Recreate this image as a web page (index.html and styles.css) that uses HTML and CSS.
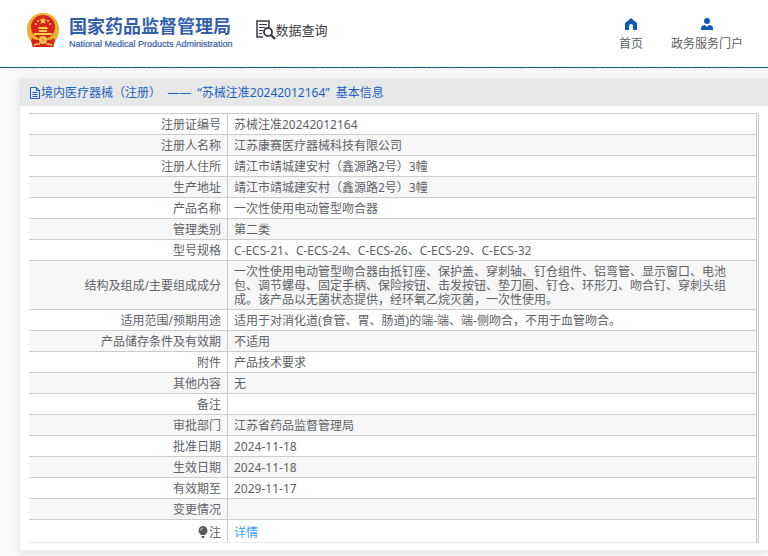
FILE: index.html
```html
<!DOCTYPE html>
<html lang="zh-CN">
<head>
    <meta charset="UTF-8">
    <meta name="viewport" content="width=device-width, initial-scale=1.0">
    <title>国家药品监督管理局 - 数据查询</title>
    <link rel="stylesheet" href="styles.css">
</head>
<body>
    <header class="header">
        <a class="logo" href="#">
            <svg class="emblem" viewBox="0 0 34 36" aria-hidden="true">
                <path d="M17 1C8 1 1 8 1 17c0 6 2 11 6 14l-1 4h22l-1-4c4-3 6-8 6-14C33 8 26 1 17 1z" fill="#eeb02c"/>
                <circle cx="17" cy="15" r="12" fill="#d8231f"/>
                <path d="M17 5l1 2.600h2.800l-2.200 1.700.8 2.700-2.400-1.600-2.400 1.600.8-2.700-2.200-1.700H16z" fill="#f7d34a"/>
                <g fill="#f7d34a">
                    <circle cx="10" cy="12" r="1"/>
                    <circle cx="12" cy="9" r="1"/>
                    <circle cx="22" cy="9" r="1"/>
                    <circle cx="24" cy="12" r="1"/>
                    <path d="M13 15h8l1 2H12zM13 18h8v2h-8zM8 21h18v2H8z"/>
                </g>
                <path d="M6 26c3 2 5 2 7 2h8c2 0 4 0 7-2l1 3-2 6H7l-2-6z" fill="#d8231f"/>
                <path d="M8 33c2-1 4-1 6-1M26 33c-2-1-4-1-6-1" fill="none" stroke="#f2c74a" stroke-width="1.500"/>
                <circle cx="17" cy="28" r="4" fill="#f2c74a"/>
                <circle cx="17" cy="28" r="1.500" fill="#e0a035"/>
            </svg>
            <span class="logo-text">
                <span class="logo-cn">国家药品监督管理局</span>
                <span class="logo-en">National Medical Products Administration</span>
            </span>
        </a>
        <a class="search-title" href="#">
            <svg class="search-icon" viewBox="0 0 20 20" fill="none" stroke="#3c3c44" aria-hidden="true">
                <path d="M7 17H1V1h12v6" stroke-width="1.500"/>
                <path d="M3 4.500h8M3 7.500h6M3 10.500h4M3 13.500h3" stroke-width="1.200"/>
                <circle cx="12" cy="12" r="4" stroke-width="1.800"/>
                <path d="M15 15l4 4" stroke-width="2.400"/>
            </svg>
            <span>数据查询</span>
        </a>
        <nav class="nav">
            <a href="#">
                <svg viewBox="0 0 12 12" aria-hidden="true"><path d="M6 0l6 5v7H8V8a2 2 0 0 0-4 0v4H0V5z" fill="#1059b4"/></svg>
                <span>首页</span>
            </a>
            <a href="#">
                <svg viewBox="0 0 12 12" aria-hidden="true"><circle cx="6" cy="3" r="3" fill="#1059b4"/><path d="M0 12V10c0-2 2-3 4-3l2 2 2-2c2 0 4 1 4 3v2z" fill="#1059b4"/></svg>
                <span>政务服务门户</span>
            </a>
        </nav>
    </header>

    <main class="card">
        <h1 class="card-title">
            <svg viewBox="0 0 12 12" fill="none" stroke="#1b62c0" aria-hidden="true">
                <path d="M1.500.5h6l3 3v8h-9zM7.500.5v3h3M3.500 5.500h5M3.500 7.500h5M3.500 9.500h5"/>
            </svg>
            <span>境内医疗器械（注册）&nbsp; ——&nbsp; “苏械注准20242012164”&nbsp; 基本信息</span>
        </h1>
        <div class="table-wrap">
            <table class="info">
                <tbody>
                    <tr><th scope="row">注册证编号</th><td>苏械注准20242012164</td></tr>
                    <tr><th scope="row">注册人名称</th><td>江苏康赛医疗器械科技有限公司</td></tr>
                    <tr><th scope="row">注册人住所</th><td>靖江市靖城建安村（鑫源路2号）3幢</td></tr>
                    <tr><th scope="row">生产地址</th><td>靖江市靖城建安村（鑫源路2号）3幢</td></tr>
                    <tr><th scope="row">产品名称</th><td>一次性使用电动管型吻合器</td></tr>
                    <tr><th scope="row">管理类别</th><td>第二类</td></tr>
                    <tr><th scope="row">型号规格</th><td>C-ECS-21、C-ECS-24、C-ECS-26、C-ECS-29、C-ECS-32</td></tr>
                    <tr><th scope="row">结构及组成/主要组成成分</th><td>一次性使用电动管型吻合器由抵钉座、保护盖、穿刺轴、钉仓组件、铝弯管、显示窗口、电池包、调节螺母、固定手柄、保险按钮、击发按钮、垫刀圈、钉仓、环形刀、吻合钉、穿刺头组成。该产品以无菌状态提供，经环氧乙烷灭菌，一次性使用。</td></tr>
                    <tr><th scope="row">适用范围/预期用途</th><td>适用于对消化道(食管、胃、肠道)的端-端、端-侧吻合，不用于血管吻合。</td></tr>
                    <tr><th scope="row">产品储存条件及有效期</th><td>不适用</td></tr>
                    <tr><th scope="row">附件</th><td>产品技术要求</td></tr>
                    <tr><th scope="row">其他内容</th><td>无</td></tr>
                    <tr><th scope="row">备注</th><td></td></tr>
                    <tr><th scope="row">审批部门</th><td>江苏省药品监督管理局</td></tr>
                    <tr><th scope="row">批准日期</th><td>2024-11-18</td></tr>
                    <tr><th scope="row">生效日期</th><td>2024-11-18</td></tr>
                    <tr><th scope="row">有效期至</th><td>2029-11-17</td></tr>
                    <tr><th scope="row">变更情况</th><td></td></tr>
                    <tr class="note">
                        <th scope="row"><svg class="bulb" viewBox="0 0 10 12" aria-hidden="true"><path d="M5 0a4.500 4.500 0 0 1 3 7.800L7 9H3L2 7.800A4.500 4.500 0 0 1 5 0zM3.500 10h3v1l-1 1h-1l-1-1z" fill="#55585c"/><path d="M2.500 4.500A2.500 2.500 0 0 1 5 2" fill="none" stroke="#fff" stroke-width=".7"/></svg>注</th>
                        <td><a href="#">详情</a></td>
                    </tr>
                </tbody>
            </table>
        </div>
    </main>
</body>
</html>
```
FILE: styles.css
```css
* {
    box-sizing: border-box;
}

body {
    margin: 0;
    background-color: #fafafa;
    color: #606266;
    font-family: "Noto Sans", "Noto Sans CJK SC", sans-serif;
    font-size: 12px;
    line-height: 14px;
}

a {
    color: inherit;
    text-decoration: none;
}

svg {
    display: block;
}

.header {
    display: flex;
    align-items: flex-start;
    height: 68px;
    padding: 12px 25px 0 26px;
    background-color: #fff;
    border-bottom: 1px solid #0f5c9c;
}

/* faint hatch under the header line */
.header + .card::before {
    content: "";
    position: absolute;
    top: 68px;
    left: 0;
    right: 0;
    height: 3px;
    background: repeating-linear-gradient(135deg, #e8e8e8 0, #e8e8e8 1px, #fafafa 1px, #fafafa 3px);
}

.logo {
    display: flex;
    gap: 9px;
    color: #345fac;
}

.emblem {
    width: 34px;
    height: 36px;
}

.logo-text {
    display: flex;
    flex-direction: column;
    padding-top: 4px;
    white-space: nowrap;
}

.logo-cn {
    font-size: 18px;
    font-weight: bold;
    line-height: 20px;
}

.logo-en {
    font-family: "Liberation Sans", Arial, sans-serif;
    font-size: 9px;
    line-height: 16px;
    -webkit-text-stroke: 0.2px;
}

.search-title {
    display: flex;
    align-items: center;
    margin-left: 23px;
    padding-top: 8px;
    color: #3c3c44;
    font-size: 13px;
    line-height: 20px;
    white-space: nowrap;
}

.search-icon {
    width: 20px;
    height: 20px;
}

.nav {
    display: flex;
    gap: 28px;
    margin-left: auto;
    padding-top: 6px;
    white-space: nowrap;
}

.nav a {
    display: flex;
    flex-direction: column;
    align-items: center;
    gap: 7px;
}

.nav svg {
    width: 12px;
    height: 12px;
}

/* runs off the right side like the full-width panel */
.card {
    margin: 10px 0 5px 19px;
    padding-bottom: 7px;
    background-color: #fff;
    border: 1px solid #ebeef5;
    border-right: 0;
    box-shadow: 0 2px 8px rgba(0, 0, 0, 0.1);
}

.card-title {
    display: flex;
    align-items: center;
    height: 27px;
    margin: 0;
    padding-left: 9px;
    background-color: #e8e8e8;
    color: #1b62c0;
    font-size: 12px;
    font-weight: normal;
}

.card-title svg {
    width: 12px;
    height: 12px;
}

.table-wrap {
    margin: 7px 9px 0;
    padding-right: 1px;
    border-right: 1px solid #ccc;
}

.info {
    width: 100%;
    border-collapse: separate;
    border-spacing: 0;
    border-top: 1px solid #ccc;
    border-right: 1px solid #ccc;
}

.info th,
.info td {
    height: 21px;
    padding: 4px 6px 2px;
    border-bottom: 1px solid #ccc;
    font-weight: normal;
}

.info th {
    width: 199px;
    border-right: 1px solid #ccc;
    text-align: right;
}

.info td {
    padding-right: 24px;
}

.info tr:nth-child(even) {
    background-color: #f7f7f7;
}

.info .note th,
.info .note td {
    height: 23px;
    padding-top: 6px;
    border-bottom-color: #ebeef5;
}

.note a {
    color: #409eff;
}

.bulb {
    display: inline-block;
    width: 10px;
    height: 12px;
    margin-right: 1px;
    vertical-align: -1px;
}
```
